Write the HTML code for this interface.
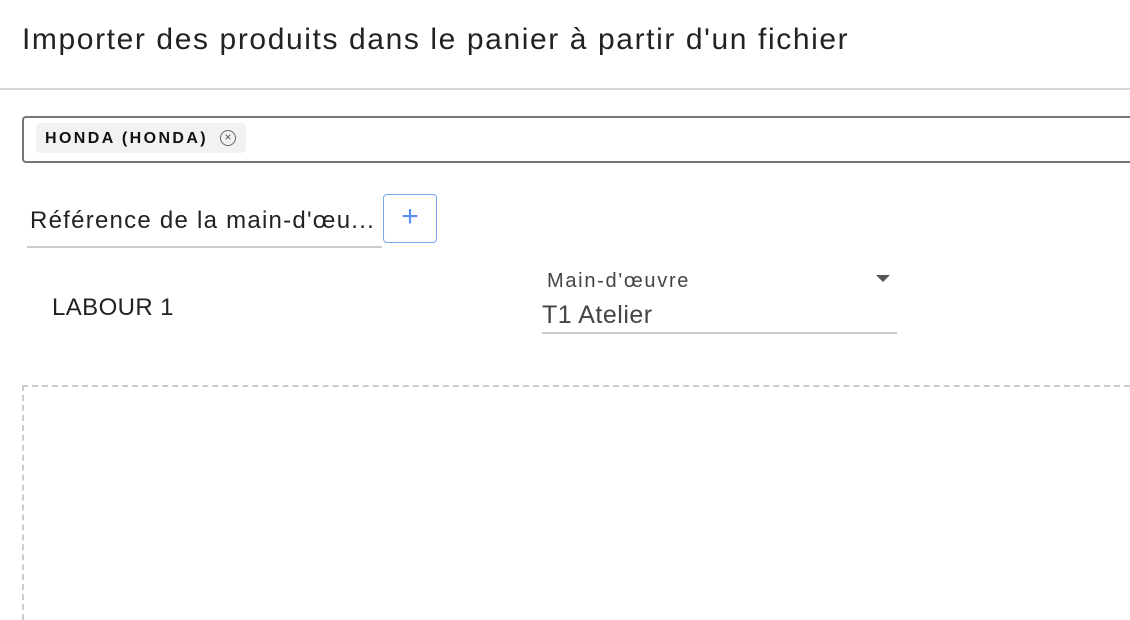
<!DOCTYPE html>
<html><head><style>
html,body{margin:0;width:1130px;height:620px;overflow:hidden;background:#fff;font-family:"Liberation Sans",sans-serif;position:relative}
.a{position:absolute;white-space:nowrap}
</style></head><body>
<div class="a" style="left:22px;top:23px;font-size:30px;color:#222;letter-spacing:1.6px">Importer des produits dans le panier à partir d'un fichier</div>
<div class="a" style="left:0;top:88px;width:1130px;height:2px;background:#d8d8d8"></div>
<div class="a" style="left:22px;top:116px;width:1108px;height:47px;border:2px solid #777;border-right:none;border-radius:4px 0 0 4px;box-sizing:border-box"></div>
<div class="a" style="left:36px;top:123px;width:210px;height:30px;background:#f1f2f3;border-radius:5px"></div>
<div class="a" style="left:45px;top:130px;font-size:16px;font-weight:bold;color:#111;letter-spacing:2.4px">HONDA (HONDA)</div>
<div class="a" style="left:220px;top:130px;width:16px;height:16px;border:1.5px solid #666;border-radius:50%;box-sizing:border-box;font-size:12px;line-height:13px;text-align:center;color:#555">×</div>
<div class="a" style="left:30px;top:207px;font-size:24px;color:#222;letter-spacing:1.25px">Référence de la main-d'œu...</div>
<div class="a" style="left:27px;top:246px;width:355px;height:2px;background:#ccc"></div>
<div class="a" style="left:383px;top:194px;width:54px;height:49px;border:1.5px solid #7aa4f0;border-radius:4px;box-sizing:border-box;color:#5a8ef0;font-size:30px;line-height:44px;text-align:center">+</div>
<div class="a" style="left:52px;top:294px;font-size:24px;color:#222;letter-spacing:0.4px">LABOUR 1</div>
<div class="a" style="left:547px;top:270px;font-size:20px;color:#444;letter-spacing:1.7px">Main-d'œuvre</div>
<div class="a" style="left:876px;top:275px;width:0;height:0;border-left:7px solid transparent;border-right:7px solid transparent;border-top:7px solid #555"></div>
<div class="a" style="left:542px;top:301px;font-size:25px;color:#444;letter-spacing:0.5px">T1 Atelier</div>
<div class="a" style="left:542px;top:332px;width:355px;height:2px;background:#ccc"></div>
<div class="a" style="left:22px;top:385px;width:1108px;height:235px;border-top:2px dashed #ccc;border-left:2px dashed #ccc;box-sizing:border-box"></div>
</body></html>
